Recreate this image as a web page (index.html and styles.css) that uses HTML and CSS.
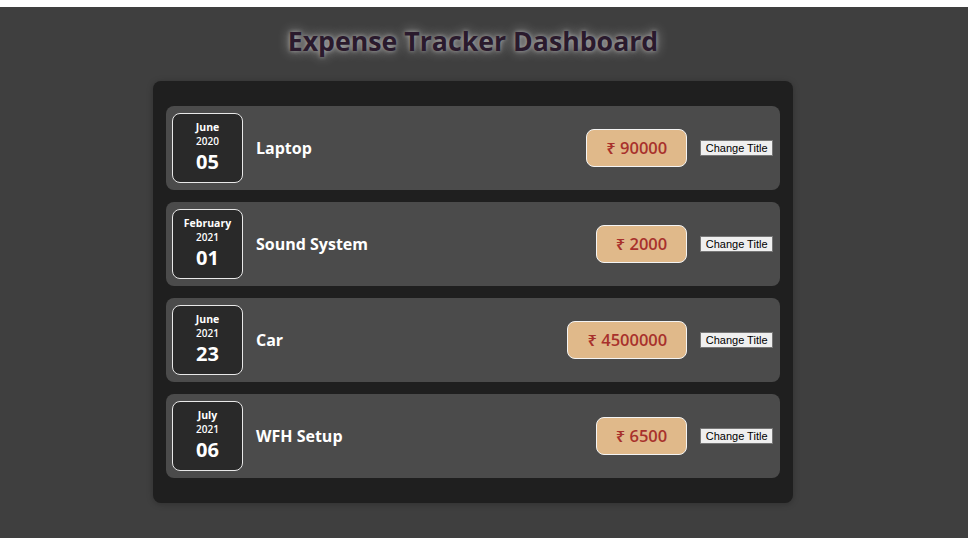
FILE: index.html
```html
<!DOCTYPE html>
<html>
<head>
<meta charset="utf-8">
<link rel="stylesheet" href="styles.css">
</head>
<body>
<div class="page">
  <h1 class="heading">Expense Tracker Dashboard</h1>
  <div class="card">
    <div class="item">
      <div class="date"><div class="month">June</div><div class="year">2020</div><div class="day">05</div></div>
      <div class="title">Laptop</div>
      <div class="amount">₹ 90000</div>
      <button class="btn">Change Title</button>
    </div>
    <div class="item">
      <div class="date"><div class="month">February</div><div class="year">2021</div><div class="day">01</div></div>
      <div class="title">Sound System</div>
      <div class="amount">₹ 2000</div>
      <button class="btn">Change Title</button>
    </div>
    <div class="item">
      <div class="date"><div class="month">June</div><div class="year">2021</div><div class="day">23</div></div>
      <div class="title">Car</div>
      <div class="amount">₹ 4500000</div>
      <button class="btn">Change Title</button>
    </div>
    <div class="item">
      <div class="date"><div class="month">July</div><div class="year">2021</div><div class="day">06</div></div>
      <div class="title">WFH Setup</div>
      <div class="amount">₹ 6500</div>
      <button class="btn">Change Title</button>
    </div>
  </div>
</div>
</body>
</html>
```
FILE: styles.css
```css
html, body {
  margin: 0;
  padding: 0;
  background: #ffffff;
}
.page {
  margin-top: 7px;
  background: #3f3f3f;
  height: 531px;
  padding: 1px 22px 0 0;
  box-sizing: border-box;
  font-family: "Open Sans", "Noto Sans", sans-serif;
}
.heading {
  margin: 17px 0 0 0;
  height: 56px;
  text-align: center;
  font-family: "Open Sans", sans-serif;
  font-weight: 700;
  font-size: 26.7px;
  line-height: 32px;
  color: #2a1a2d;
  text-shadow: 0 0 12px rgba(255,255,255,0.55), 0 0 4px rgba(255,255,255,0.45);
}
.card {
  width: 640px;
  margin: 0 auto;
  box-sizing: border-box;
  padding: 25px 13px;
  background: #1f1f1f;
  border-radius: 8px;
  box-shadow: 0 1px 6px rgba(0,0,0,0.25);
  display: flex;
  flex-direction: column;
  gap: 12px;
}
.item {
  display: flex;
  align-items: center;
  height: 84px;
  box-sizing: border-box;
  padding: 0 7px 0 6px;
  background: #4b4b4b;
  border-radius: 8px;
}
.date {
  width: 71px;
  height: 70px;
  box-sizing: border-box;
  border: 1px solid #e8e8e8;
  border-radius: 8px;
  background: #292929;
  color: #ffffff;
  display: flex;
  flex-direction: column;
  align-items: center;
  justify-content: center;
  font-weight: 700;
}
.month {
  font-size: 10.5px;
  line-height: 14px;
}
.year {
  font-size: 10px;
  line-height: 14px;
  font-weight: 600;
}
.day {
  font-size: 20px;
  line-height: 28px;
}
.title {
  flex: 1;
  margin-left: 13px;
  color: #ffffff;
  font-size: 16px;
  font-weight: 700;
}
.amount {
  padding: 8px 19px;
  border: 1px solid #f4f4f4;
  border-radius: 8px;
  background: #e0b98a;
  color: #a8312c;
  font-size: 16.5px;
  line-height: 20px;
  font-weight: 600;
}
.btn {
  margin-left: 13px;
  font-family: Arial, "Liberation Sans", sans-serif;
  font-size: 11px;
  padding: 1px 4.5px;
  background: #efefef;
  border: 1px solid #767676;
  border-radius: 0;
  color: #000;
}
```
